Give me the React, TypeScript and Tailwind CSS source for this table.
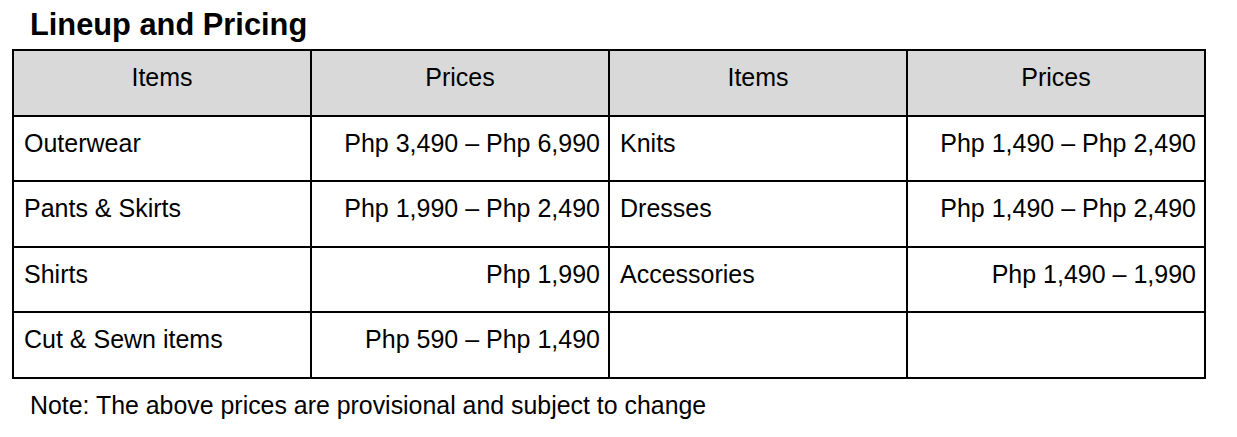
import * as React from "react";

type Row = { item: string; price: string; item2: string; price2: string };

const rows: Row[] = [
  { item: "Outerwear", price: "Php 3,490 – Php 6,990", item2: "Knits", price2: "Php 1,490 – Php 2,490" },
  { item: "Pants & Skirts", price: "Php 1,990 – Php 2,490", item2: "Dresses", price2: "Php 1,490 – Php 2,490" },
  { item: "Shirts", price: "Php 1,990", item2: "Accessories", price2: "Php 1,490 – 1,990" },
  { item: "Cut & Sewn items", price: "Php 590 – Php 1,490", item2: "", price2: "" },
];

const cell = "h-[65.6px] border-r-2 border-b-2 border-black pt-[12px] leading-[28px] whitespace-nowrap";

export default function App() {
  return (
    <div
      className="w-[1237px] h-[437px] bg-white text-black pl-[12px]"
      style={{ fontFamily: '"Liberation Sans", Arial, sans-serif' }}
    >
      <h1 className="ml-[18px] pt-[7px] text-[30.8px] font-bold leading-[36px]">Lineup and Pricing</h1>

      {/* Pricing table */}
      <div className="mt-[6px] w-[1194px] grid grid-cols-4 border-t-2 border-l-2 border-black text-[25px]">
        {["Items", "Prices", "Items", "Prices"].map((h, i) => (
          <div key={i} className={`${cell} bg-[#d9d9d9] text-center`}>
            {h}
          </div>
        ))}
        {rows.map((r, i) => (
          <React.Fragment key={i}>
            <div className={`${cell} pl-[10px]`}>{r.item}</div>
            <div className={`${cell} pr-[8px] text-right`}>{r.price}</div>
            <div className={`${cell} pl-[10px]`}>{r.item2}</div>
            <div className={`${cell} pr-[8px] text-right`}>{r.price2}</div>
          </React.Fragment>
        ))}
      </div>

      <p className="ml-[18px] mt-[12px] text-[24.9px] leading-[28px]">
        Note: The above prices are provisional and subject to change
      </p>
    </div>
  );
}
